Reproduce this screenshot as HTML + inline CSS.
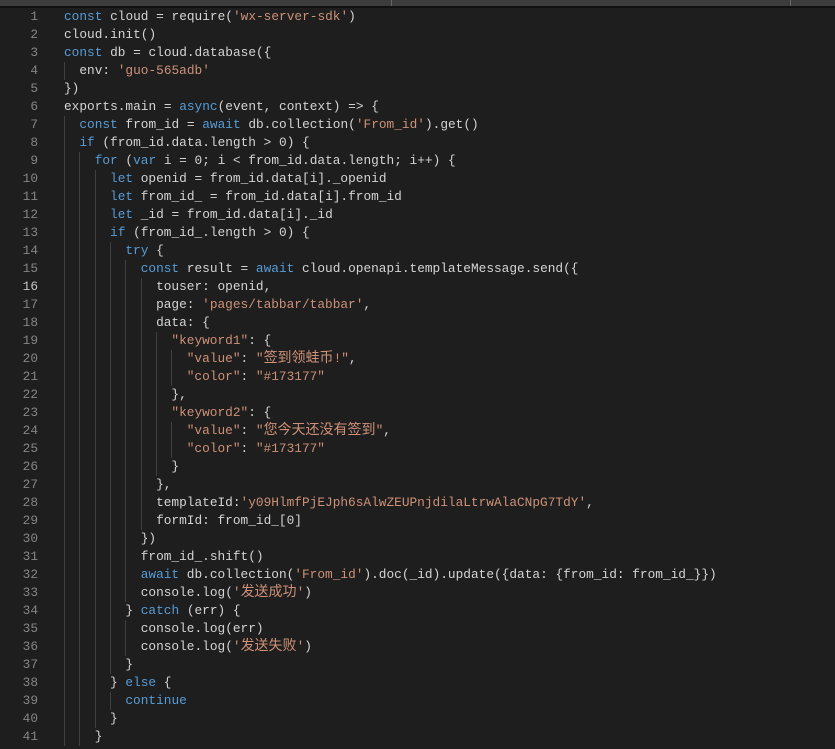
<!DOCTYPE html>
<html><head><meta charset="utf-8"><style>
html,body{margin:0;padding:0;background:#1e1e1e;width:835px;height:749px;overflow:hidden}
.top{position:absolute;left:0;top:0;width:835px;height:6px;background:#3c3c3c;border-bottom:2px solid #111}
.sep{position:absolute;top:0;width:1px;height:6px;background:#666}
.ed{position:absolute;left:0;top:8px;width:835px;font-family:"Liberation Mono","Noto Sans CJK SC",monospace;font-size:12.8px;line-height:18px;color:#d4d4d4}
.l{height:18px;position:relative}
.n{position:absolute;left:0;width:38px;text-align:right;color:#858585}
.n.a{color:#c6c6c6}
.c{position:absolute;left:64px;white-space:pre}
.g{display:inline-block;width:2ch;box-shadow:inset 1px 0 0 #404040;height:18px;vertical-align:top}
.k{color:#569cd6}.s{color:#ce9178}
.z{font-size:14px}
</style></head><body>
<div class="top"><div class="sep" style="left:391px"></div><div class="sep" style="left:790px"></div></div>
<div class="ed">
<div class="l"><span class="n">1</span><span class="c"><span class="k">const</span> cloud = require(<span class="s">'wx-server-sdk'</span>)</span></div>
<div class="l"><span class="n">2</span><span class="c">cloud.init()</span></div>
<div class="l"><span class="n">3</span><span class="c"><span class="k">const</span> db = cloud.database({</span></div>
<div class="l"><span class="n">4</span><span class="c"><span class="g"></span>env: <span class="s">'guo-565adb'</span></span></div>
<div class="l"><span class="n">5</span><span class="c">})</span></div>
<div class="l"><span class="n">6</span><span class="c">exports.main = <span class="k">async</span>(event, context) =&gt; {</span></div>
<div class="l"><span class="n">7</span><span class="c"><span class="g"></span><span class="k">const</span> from_id = <span class="k">await</span> db.collection(<span class="s">'From_id'</span>).get()</span></div>
<div class="l"><span class="n">8</span><span class="c"><span class="g"></span><span class="k">if</span> (from_id.data.length &gt; 0) {</span></div>
<div class="l"><span class="n">9</span><span class="c"><span class="g"></span><span class="g"></span><span class="k">for</span> (<span class="k">var</span> i = 0; i &lt; from_id.data.length; i++) {</span></div>
<div class="l"><span class="n">10</span><span class="c"><span class="g"></span><span class="g"></span><span class="g"></span><span class="k">let</span> openid = from_id.data[i]._openid</span></div>
<div class="l"><span class="n">11</span><span class="c"><span class="g"></span><span class="g"></span><span class="g"></span><span class="k">let</span> from_id_ = from_id.data[i].from_id</span></div>
<div class="l"><span class="n">12</span><span class="c"><span class="g"></span><span class="g"></span><span class="g"></span><span class="k">let</span> _id = from_id.data[i]._id</span></div>
<div class="l"><span class="n">13</span><span class="c"><span class="g"></span><span class="g"></span><span class="g"></span><span class="k">if</span> (from_id_.length &gt; 0) {</span></div>
<div class="l"><span class="n">14</span><span class="c"><span class="g"></span><span class="g"></span><span class="g"></span><span class="g"></span><span class="k">try</span> {</span></div>
<div class="l"><span class="n">15</span><span class="c"><span class="g"></span><span class="g"></span><span class="g"></span><span class="g"></span><span class="g"></span><span class="k">const</span> result = <span class="k">await</span> cloud.openapi.templateMessage.send({</span></div>
<div class="l"><span class="n a">16</span><span class="c"><span class="g"></span><span class="g"></span><span class="g"></span><span class="g"></span><span class="g"></span><span class="g"></span>touser: openid,</span></div>
<div class="l"><span class="n">17</span><span class="c"><span class="g"></span><span class="g"></span><span class="g"></span><span class="g"></span><span class="g"></span><span class="g"></span>page: <span class="s">'pages/tabbar/tabbar'</span>,</span></div>
<div class="l"><span class="n">18</span><span class="c"><span class="g"></span><span class="g"></span><span class="g"></span><span class="g"></span><span class="g"></span><span class="g"></span>data: {</span></div>
<div class="l"><span class="n">19</span><span class="c"><span class="g"></span><span class="g"></span><span class="g"></span><span class="g"></span><span class="g"></span><span class="g"></span><span class="g"></span><span class="s">"keyword1"</span>: {</span></div>
<div class="l"><span class="n">20</span><span class="c"><span class="g"></span><span class="g"></span><span class="g"></span><span class="g"></span><span class="g"></span><span class="g"></span><span class="g"></span><span class="g"></span><span class="s">"value"</span>: <span class="s">"<span class="z">签到领蛙币</span>!"</span>,</span></div>
<div class="l"><span class="n">21</span><span class="c"><span class="g"></span><span class="g"></span><span class="g"></span><span class="g"></span><span class="g"></span><span class="g"></span><span class="g"></span><span class="g"></span><span class="s">"color"</span>: <span class="s">"#173177"</span></span></div>
<div class="l"><span class="n">22</span><span class="c"><span class="g"></span><span class="g"></span><span class="g"></span><span class="g"></span><span class="g"></span><span class="g"></span><span class="g"></span>},</span></div>
<div class="l"><span class="n">23</span><span class="c"><span class="g"></span><span class="g"></span><span class="g"></span><span class="g"></span><span class="g"></span><span class="g"></span><span class="g"></span><span class="s">"keyword2"</span>: {</span></div>
<div class="l"><span class="n">24</span><span class="c"><span class="g"></span><span class="g"></span><span class="g"></span><span class="g"></span><span class="g"></span><span class="g"></span><span class="g"></span><span class="g"></span><span class="s">"value"</span>: <span class="s">"<span class="z">您今天还没有签到</span>"</span>,</span></div>
<div class="l"><span class="n">25</span><span class="c"><span class="g"></span><span class="g"></span><span class="g"></span><span class="g"></span><span class="g"></span><span class="g"></span><span class="g"></span><span class="g"></span><span class="s">"color"</span>: <span class="s">"#173177"</span></span></div>
<div class="l"><span class="n">26</span><span class="c"><span class="g"></span><span class="g"></span><span class="g"></span><span class="g"></span><span class="g"></span><span class="g"></span><span class="g"></span>}</span></div>
<div class="l"><span class="n">27</span><span class="c"><span class="g"></span><span class="g"></span><span class="g"></span><span class="g"></span><span class="g"></span><span class="g"></span>},</span></div>
<div class="l"><span class="n">28</span><span class="c"><span class="g"></span><span class="g"></span><span class="g"></span><span class="g"></span><span class="g"></span><span class="g"></span>templateId:<span class="s">'y09HlmfPjEJph6sAlwZEUPnjdilaLtrwAlaCNpG7TdY'</span>,</span></div>
<div class="l"><span class="n">29</span><span class="c"><span class="g"></span><span class="g"></span><span class="g"></span><span class="g"></span><span class="g"></span><span class="g"></span>formId: from_id_[0]</span></div>
<div class="l"><span class="n">30</span><span class="c"><span class="g"></span><span class="g"></span><span class="g"></span><span class="g"></span><span class="g"></span>})</span></div>
<div class="l"><span class="n">31</span><span class="c"><span class="g"></span><span class="g"></span><span class="g"></span><span class="g"></span><span class="g"></span>from_id_.shift()</span></div>
<div class="l"><span class="n">32</span><span class="c"><span class="g"></span><span class="g"></span><span class="g"></span><span class="g"></span><span class="g"></span><span class="k">await</span> db.collection(<span class="s">'From_id'</span>).doc(_id).update({data: {from_id: from_id_}})</span></div>
<div class="l"><span class="n">33</span><span class="c"><span class="g"></span><span class="g"></span><span class="g"></span><span class="g"></span><span class="g"></span>console.log(<span class="s">'<span class="z">发送成功</span>'</span>)</span></div>
<div class="l"><span class="n">34</span><span class="c"><span class="g"></span><span class="g"></span><span class="g"></span><span class="g"></span>} <span class="k">catch</span> (err) {</span></div>
<div class="l"><span class="n">35</span><span class="c"><span class="g"></span><span class="g"></span><span class="g"></span><span class="g"></span><span class="g"></span>console.log(err)</span></div>
<div class="l"><span class="n">36</span><span class="c"><span class="g"></span><span class="g"></span><span class="g"></span><span class="g"></span><span class="g"></span>console.log(<span class="s">'<span class="z">发送失败</span>'</span>)</span></div>
<div class="l"><span class="n">37</span><span class="c"><span class="g"></span><span class="g"></span><span class="g"></span><span class="g"></span>}</span></div>
<div class="l"><span class="n">38</span><span class="c"><span class="g"></span><span class="g"></span><span class="g"></span>} <span class="k">else</span> {</span></div>
<div class="l"><span class="n">39</span><span class="c"><span class="g"></span><span class="g"></span><span class="g"></span><span class="g"></span><span class="k">continue</span></span></div>
<div class="l"><span class="n">40</span><span class="c"><span class="g"></span><span class="g"></span><span class="g"></span>}</span></div>
<div class="l"><span class="n">41</span><span class="c"><span class="g"></span><span class="g"></span>}</span></div>
</div>
</body></html>
